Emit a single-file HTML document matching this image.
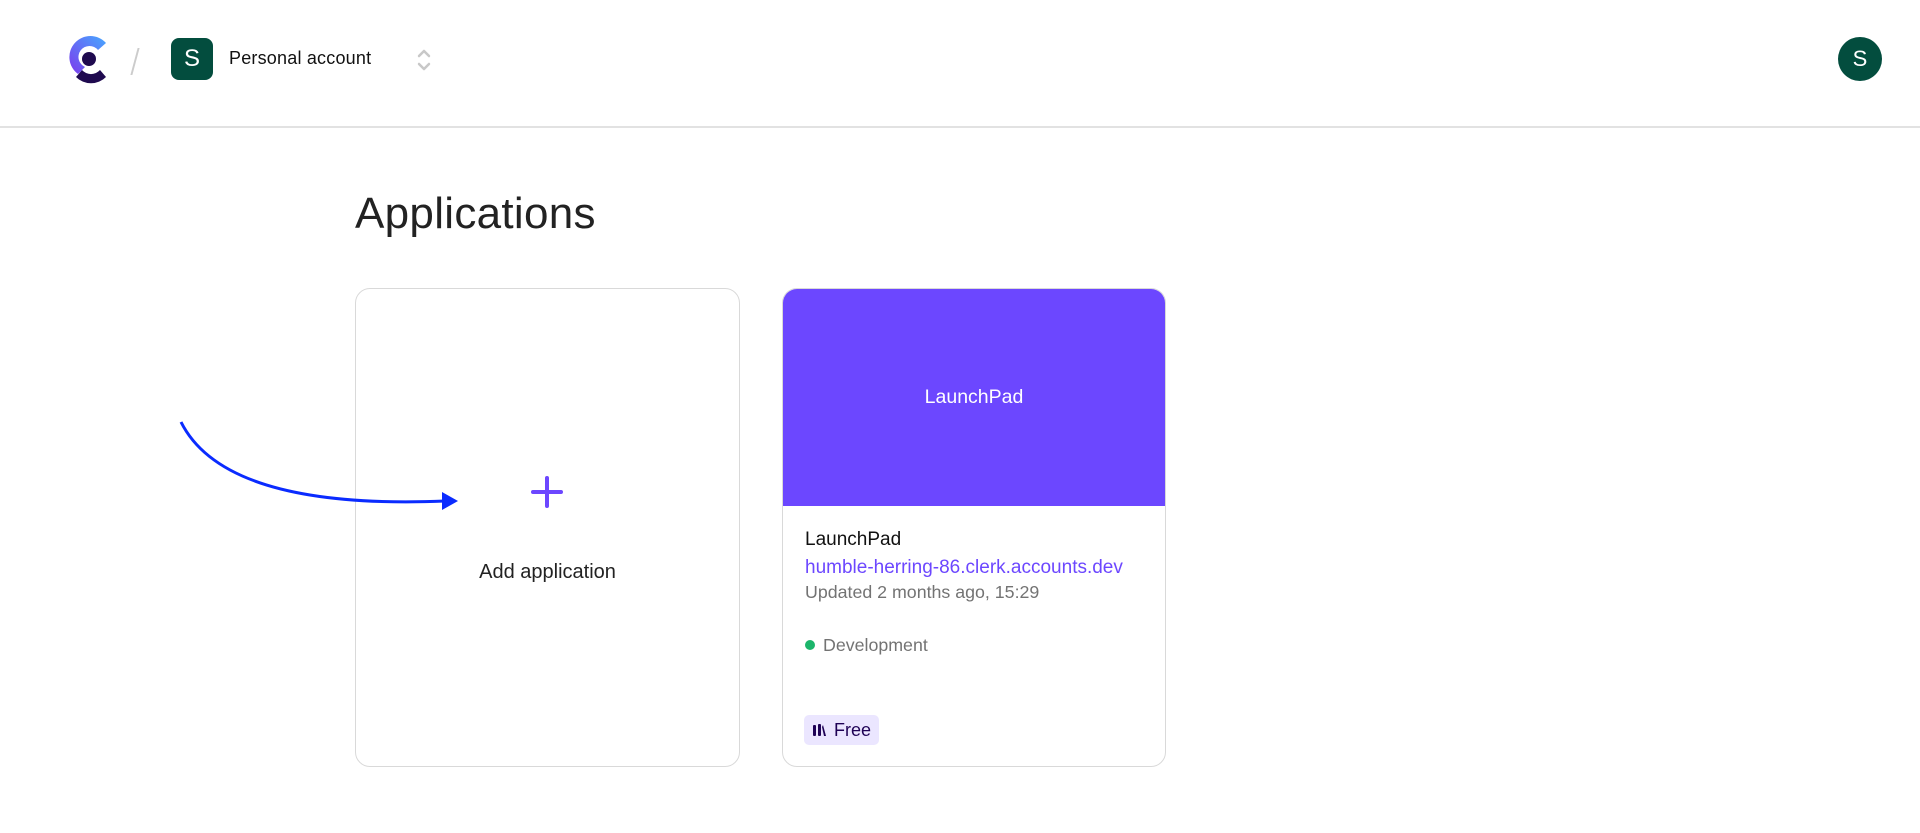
<!DOCTYPE html>
<html><head><meta charset="utf-8"><style>
body{margin:0;width:1920px;height:833px;background:#fff;font-family:"Liberation Sans",sans-serif;position:relative;overflow:hidden}
.a{position:absolute}
.hdr{left:0;top:0;width:1920px;height:126px;border-bottom:2px solid #e2e2e2}
.card{border:1.5px solid #d9d9d9;border-radius:15px;box-sizing:border-box;overflow:hidden}
</style></head><body>
<div class="a hdr"></div>
<svg class="a" style="left:66px;top:36px" width="42" height="48" viewBox="0 0 42 48">
<defs><linearGradient id="g" x1="0" y1="1" x2="1" y2="0"><stop offset="0" stop-color="#7c3aed"/><stop offset="1" stop-color="#47a8ff"/></linearGradient></defs>
<path d="M40 7 A21 21 0 1 0 12 38 L19 31 A11 11 0 1 1 32 14 Z" fill="url(#g)"/>
<circle cx="23" cy="23" r="7" fill="#1f0a4f"/>
<path d="M10 41 A21 21 0 0 0 40 41 L34 34 A12 12 0 0 1 16 34 Z" fill="#1f0a4f"/>
</svg>
<div class="a" style="left:134px;top:48px;width:2px;height:27px;background:#ccc;transform:skewX(-15deg)"></div>
<div class="a" style="left:171px;top:38px;width:42px;height:42px;border-radius:8px;background:#034d3e;color:#fff;font-size:24px;line-height:42px;text-align:center">S</div>
<div class="a" style="left:229px;top:47px;font-size:18px;line-height:22px;color:#111;letter-spacing:0.2px">Personal account</div>
<svg class="a" style="left:416px;top:48px" width="16" height="24" viewBox="0 0 16 24" fill="none" stroke="#c8c8c8" stroke-width="2.5" stroke-linecap="round" stroke-linejoin="round"><path d="M3 8 L8 3 L13 8 M3 16 L8 21 L13 16"/></svg>
<div class="a" style="left:1838px;top:37px;width:44px;height:44px;border-radius:50%;background:#034d3e;color:#fff;font-size:22px;line-height:44px;text-align:center">S</div>
<div class="a" style="left:355px;top:187px;font-size:44px;line-height:54px;color:#222;letter-spacing:0.3px">Applications</div>
<div class="a card" style="left:355px;top:288px;width:385px;height:479px"></div>
<svg class="a" style="left:530px;top:475px" width="34" height="34" viewBox="0 0 34 34" stroke="#6c47ff" stroke-width="4" stroke-linecap="round"><path d="M17 3V31M3 17H31"/></svg>
<div class="a" style="left:355px;top:561px;width:385px;text-align:center;font-size:20px;line-height:22px;color:#222">Add application</div>
<div class="a card" style="left:782px;top:288px;width:384px;height:479px">
<div style="height:217px;background:#6c47ff;color:#fff;font-size:19.5px;line-height:217px;text-align:center">LaunchPad</div>
</div>
<div class="a" style="left:805px;top:529px;font-size:19px;line-height:22px;color:#111">LaunchPad</div>
<div class="a" style="left:805px;top:557px;font-size:19px;line-height:22px;color:#6c47ff">humble-herring-86.clerk.accounts.dev</div>
<div class="a" style="left:805px;top:581px;font-size:17.8px;line-height:22px;color:#737373">Updated 2 months ago, 15:29</div>
<div class="a" style="left:805px;top:640px;width:10px;height:10px;border-radius:50%;background:#1cb56b"></div>
<div class="a" style="left:823px;top:634px;font-size:17.8px;line-height:22px;color:#737373">Development</div>
<div class="a" style="left:804px;top:715px;width:75px;height:30px;border-radius:5px;background:#ebe6ff"></div>
<svg class="a" style="left:813px;top:723px" width="14" height="14" viewBox="0 0 14 14" fill="#1f0256"><rect x="0" y="2" width="3" height="11" rx="1"/><rect x="5" y="1" width="3" height="12" rx="1"/><path d="M10 2 L13 13 L11 13 L9 4Z"/></svg>
<div class="a" style="left:834px;top:719px;font-size:18px;line-height:22px;color:#1f0256">Free</div>
<svg class="a" style="left:0;top:0" width="600" height="600"><path d="M181 422 Q225 510 445 501" fill="none" stroke="#0a2bff" stroke-width="3"/><path d="M442 492 L458 501 L442 510 Z" fill="#0a2bff"/></svg>
</body></html>
